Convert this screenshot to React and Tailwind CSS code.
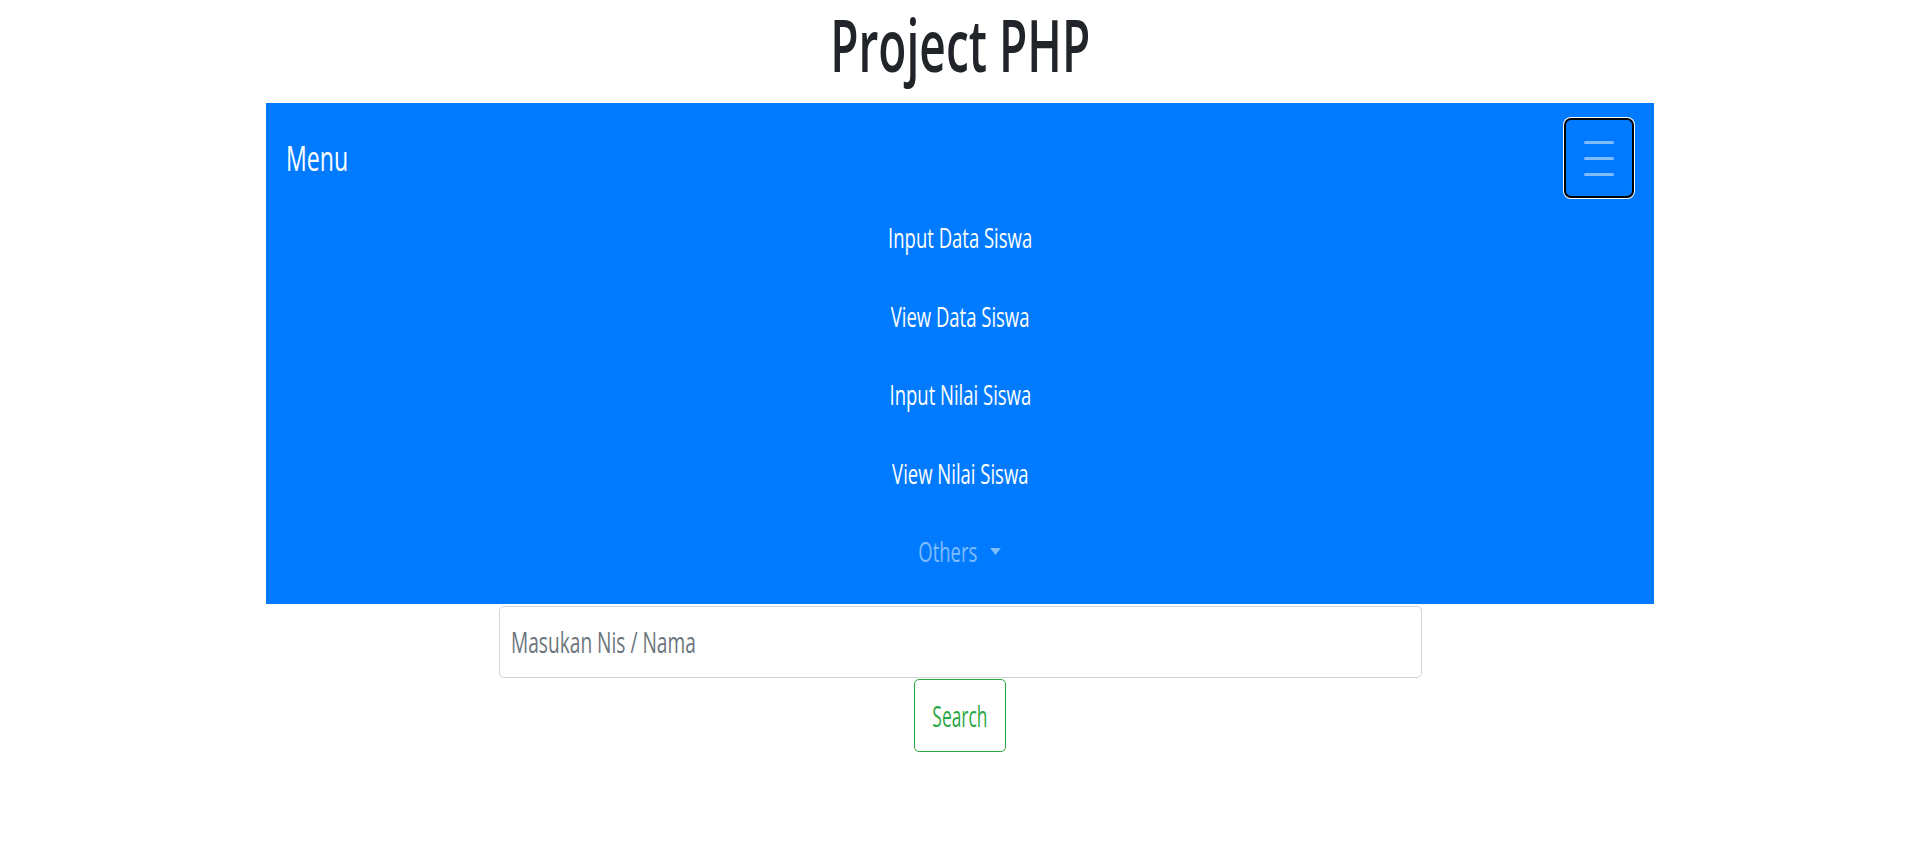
import { useState } from "react";

const links = ["Input Data Siswa", "View Data Siswa", "Input Nilai Siswa", "View Nilai Siswa"];

function Toggler() {
  return (
    <button className="w-[70px] h-[80px] rounded-[7px] border-2 border-black ring-1 ring-white flex flex-col items-center justify-center gap-[13px] bg-[#007bff]">
      <span className="block w-[30px] h-[3px] bg-white/50 rounded-sm" />
      <span className="block w-[30px] h-[3px] bg-white/50 rounded-sm" />
      <span className="block w-[30px] h-[3px] bg-white/50 rounded-sm" />
    </button>
  );
}

export default function App() {
  const [keyword, setKeyword] = useState("");

  return (
    <div className="w-full min-h-[850px] bg-white font-['Open_Sans',sans-serif] text-[#212529]">
      <h1 className="text-center text-[72px] leading-[88px] font-semibold mb-[15px]">
        <span className="inline-block scale-x-[0.64] origin-center">Project PHP</span>
      </h1>

      <nav className="w-[1388px] mx-auto bg-[#007bff] pb-[13.5px]">
        <div className="flex items-center justify-between pt-[15px] pl-[20px] pr-[20px]">
          <span className="text-[35px] leading-[48px] text-white inline-block scale-x-[0.66] origin-left">
            Menu
          </span>
          <Toggler />
        </div>
        <ul className="flex flex-col items-center text-[28px] leading-[78.5px]">
          {links.map((l) => (
            <li key={l} className="text-white">
              <span className="inline-block scale-x-[0.66] origin-center">{l}</span>
            </li>
          ))}
          <li className="text-white/50">
            <span className="inline-flex items-center scale-x-[0.66] origin-center">
              Others
              <span className="ml-[20px] w-0 h-0 border-x-[8px] border-x-transparent border-t-[7px] border-t-white/50" />
            </span>
          </li>
        </ul>
      </nav>

      <form className="flex flex-col items-center" onSubmit={(e) => e.preventDefault()}>
        <div className="relative mt-[2px] w-[923px] h-[72px]">
          <input
            type="text"
            value={keyword}
            onChange={(e) => setKeyword(e.target.value)}
            placeholder="Masukan Nis / Nama"
            className="w-full h-full border border-[#ced4da] rounded-[5px] bg-white outline-none placeholder:text-transparent"
          />
          {keyword === "" && (
            <span className="pointer-events-none absolute left-[12px] top-0 h-full flex items-center text-[29px] text-[#6c757d]">
              <span className="inline-block scale-x-[0.66] origin-left">Masukan Nis / Nama</span>
            </span>
          )}
        </div>
        <button
          type="submit"
          className="mt-px w-[92px] h-[73px] border border-[#28a745] rounded-[5px] text-[#28a745] text-[29px] flex items-center justify-center"
        >
          <span className="inline-block scale-x-[0.6] origin-center">Search</span>
        </button>
      </form>
    </div>
  );
}
